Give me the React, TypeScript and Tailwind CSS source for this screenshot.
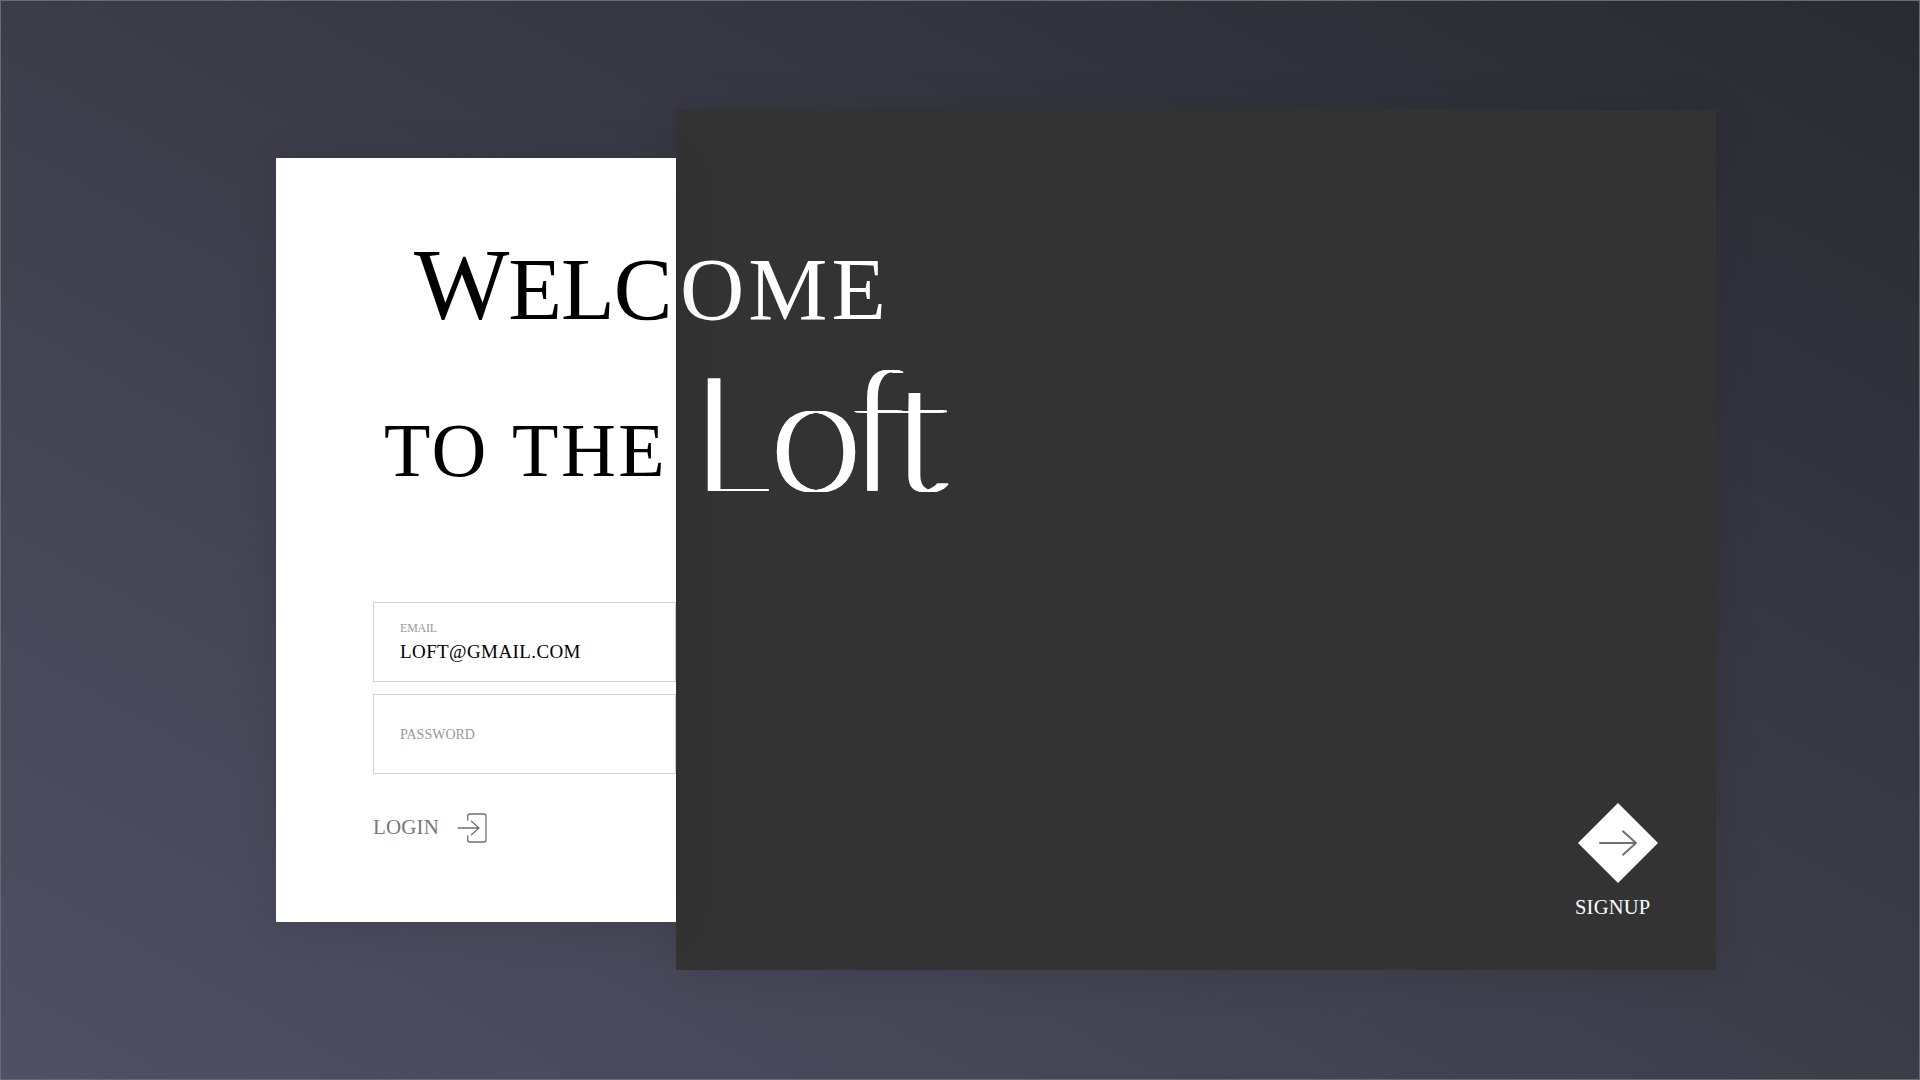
import React from "react";

const serif = "font-['Liberation_Serif',serif]";

function LoginIcon() {
  return (
    <svg width="30" height="30" viewBox="0 0 30 30" fill="none" stroke="#707070" strokeWidth="1.3" strokeLinecap="round" strokeLinejoin="round">
      <path d="M10.7 7V3Q10.7 1 12.7 1H27Q29 1 29 3V27Q29 29 27 29H12.7Q10.7 29 10.7 27V23" />
      <path d="M1 15H22M14.5 8.3L22 15L14.5 21.7" />
    </svg>
  );
}

function SignupIcon() {
  return (
    <svg width="80" height="80" viewBox="0 0 80 80" fill="none">
      <path d="M40 0L80 40L40 80L0 40Z" fill="#fff" />
      <path d="M22 40H58M45 28.3L58 40L45 51.7" stroke="#707070" strokeWidth="2" strokeLinecap="round" strokeLinejoin="round" />
    </svg>
  );
}

// Horizontal shadows thicken only the vertical stems of the hairline weight.
function Wordmark() {
  return (
    <span className="ml-[16px] mt-[2px] block h-[160px] whitespace-nowrap font-['Lato',sans-serif] text-[160px] font-thin leading-[160px] [font-variant-ligatures:none] [text-shadow:1px_0_#fff,2px_0_#fff,3px_0_#fff,4px_0_#fff,5px_0_#fff,6px_0_#fff,7px_0_#fff,8px_0_#fff,9px_0_#fff,10px_0_#fff]">
      <span className="inline-block origin-left scale-x-[0.85] tracking-[-5px] [text-shadow:1px_0_#fff,2px_0_#fff,3px_0_#fff,4px_0_#fff,5px_0_#fff,6px_0_#fff,7px_0_#fff,8px_0_#fff,9px_0_#fff,10px_0_#fff,11px_0_#fff,12px_0_#fff,13px_0_#fff]">L</span>
      <span className="tracking-[-5px]">o</span>
      <span className="inline-block origin-[0_142px] scale-x-[0.9] scale-y-[1.065] tracking-[-14px]">f</span>
      <span className="inline-block origin-[0_142px] scale-y-[1.065] [clip-path:inset(50px_-20px_0_-20px)]">t</span>
    </span>
  );
}

export default function App() {
  return (
    <main className={`flex h-[1080px] w-[1920px] items-center overflow-hidden border border-[#6b6b6b] bg-[linear-gradient(to_top_right,#4f5064_0%,#3d3d4a_50%,#2a2a32_100%)] pl-[275px] ${serif}`}>
      <section className="relative z-10 h-[764px] w-[400px] shrink-0 bg-white pt-[74px] shadow-[0_3px_40px_rgba(0,0,0,0.1)]">
        <h1 className="text-black">
          <span className="ml-[138px] block h-[116px] whitespace-nowrap text-[88px] leading-[116px] tracking-[-1px]">
            <span className="text-[101px] leading-[0]">W</span>ELC
          </span>
          <span className="ml-[108px] mt-[47px] block h-[110px] whitespace-nowrap text-[76px] leading-[110px] tracking-[2.5px] [word-spacing:3px]">
            TO THE
          </span>
        </h1>
        <form className="ml-[97px] mt-[97px]">
          <div className="flex h-20 w-[303px] flex-col border border-[#d2d2d2] pl-[26px] pt-[18px]">
            <label className="text-xs leading-[14px] tracking-[-0.2px] text-[#999]">EMAIL</label>
            <span className="mt-[5px] text-[19px] leading-6 tracking-[0.4px] text-black">LOFT@GMAIL.COM</span>
          </div>
          <div className="mt-3 flex h-20 w-[303px] items-center border border-[#d2d2d2] pl-[26px]">
            <label className="text-[14px] text-[#999]">PASSWORD</label>
          </div>
          <button type="button" className="mt-[39px] flex items-center text-[21px] leading-[30px] text-[#787878]">
            <span className="relative -top-px mr-[18px] tracking-[0.15px]">LOGIN</span>
            <LoginIcon />
          </button>
        </form>
      </section>
      <section className="flex h-[860px] w-[1040px] shrink-0 flex-col bg-[#333333] pt-[121px] text-white shadow-[0_3px_40px_rgba(0,0,0,0.1)]">
        <h1>
          <span className="ml-1 block h-[116px] text-[89px] leading-[116px] tracking-[4px]">OME</span>
          <Wordmark />
        </h1>
        <button type="button" className="mr-[58px] mt-auto mb-[49px] flex w-20 flex-col self-end text-[20.5px] leading-7">
          <SignupIcon />
          <span className="-ml-[3px] mt-2.5 text-left tracking-[0.2px]">SIGNUP</span>
        </button>
      </section>
    </main>
  );
}
